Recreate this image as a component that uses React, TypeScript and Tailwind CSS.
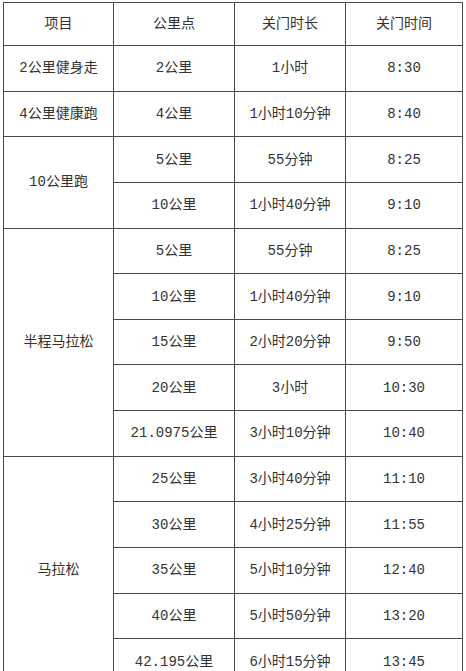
import React from "react";

type Row = { item?: string; span?: number; km: string; dur: string; time: string };

const rows: Row[] = [
  { item: "2公里健身走", span: 1, km: "2公里", dur: "1小时", time: "8:30" },
  { item: "4公里健康跑", span: 1, km: "4公里", dur: "1小时10分钟", time: "8:40" },
  { item: "10公里跑", span: 2, km: "5公里", dur: "55分钟", time: "8:25" },
  { km: "10公里", dur: "1小时40分钟", time: "9:10" },
  { item: "半程马拉松", span: 5, km: "5公里", dur: "55分钟", time: "8:25" },
  { km: "10公里", dur: "1小时40分钟", time: "9:10" },
  { km: "15公里", dur: "2小时20分钟", time: "9:50" },
  { km: "20公里", dur: "3小时", time: "10:30" },
  { km: "21.0975公里", dur: "3小时10分钟", time: "10:40" },
  { item: "马拉松", span: 5, km: "25公里", dur: "3小时40分钟", time: "11:10" },
  { km: "30公里", dur: "4小时25分钟", time: "11:55" },
  { km: "35公里", dur: "5小时10分钟", time: "12:40" },
  { km: "40公里", dur: "5小时50分钟", time: "13:20" },
  { km: "42.195公里", dur: "6小时15分钟", time: "13:45" },
];

const cell = "border border-[#4a4a4a] text-center align-middle p-0";

export default function App() {
  return (
    <div className="w-[466px] h-[671px] overflow-hidden bg-white">
      <table
        className="ml-[3px] mt-[2px] border-collapse table-fixed text-[14px] leading-none text-[#333]"
        style={{ fontFamily: '"Liberation Mono", "Noto Sans CJK SC", monospace', width: 459 }}
      >
        <colgroup>
          <col style={{ width: 110 }} />
          <col style={{ width: 121 }} />
          <col style={{ width: 111 }} />
          <col style={{ width: 117 }} />
        </colgroup>
        <tbody>
          <tr className="h-[43px]">
            <td className={cell}>项目</td>
            <td className={cell}>公里点</td>
            <td className={cell}>关门时长</td>
            <td className={cell}>关门时间</td>
          </tr>
          {rows.map((r, i) => (
            <tr key={i} className="h-[45.65px]">
              {r.item && (
                <td className={cell} rowSpan={r.span}>
                  {r.item}
                </td>
              )}
              <td className={cell}>{r.km}</td>
              <td className={cell}>{r.dur}</td>
              <td className={cell}>{r.time}</td>
            </tr>
          ))}
        </tbody>
      </table>
    </div>
  );
}
